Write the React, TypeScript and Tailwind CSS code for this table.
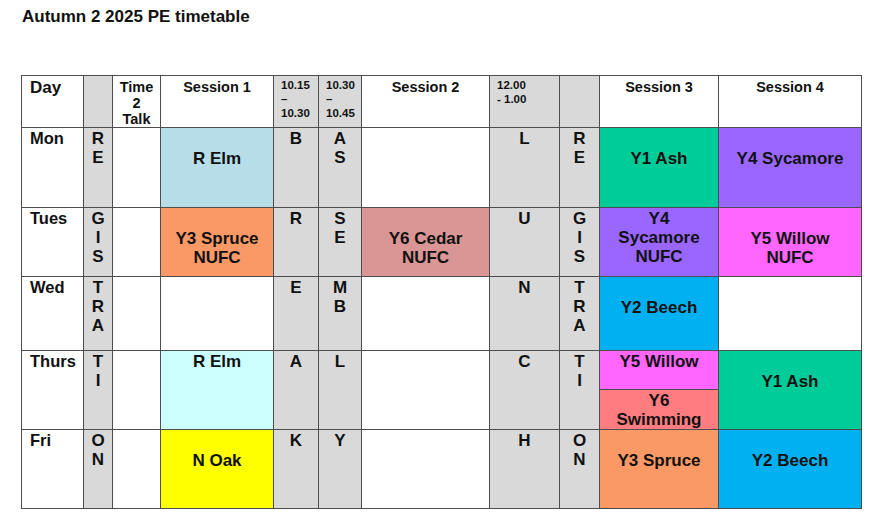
// Autumn 2 PE timetable
const cell = "border-r border-b border-[#4d4d4d]";
const gray = `${cell} bg-[#d9d9d9] text-center pt-px`;
const head = `${cell} bg-white text-center text-[14.5px] leading-[16px] pt-[3px]`;
const time = `${cell} bg-[#d9d9d9] text-[11.5px] leading-[14px] pl-[7px] pt-[2px]`;
const day = `${cell} bg-white pl-[8px] pt-px text-[16.5px]`;
const slot = `${cell} text-center pt-[21px]`;
const slotTop = `${cell} text-center pt-px`;

function Letters({ chars }: { chars: string[] }) {
  return (
    <>
      {chars.map((c, i) => (
        <div key={i}>{c}</div>
      ))}
    </>
  );
}

export default function App() {
  return (
    <div className="min-h-[527px] bg-white pl-[21px] pt-[7px] font-['Liberation_Sans',Arial,sans-serif] font-bold text-[#111]">
      <h1 className="text-[17px] leading-[20px] pl-px">Autumn 2 2025 PE timetable</h1>

      <div className="mt-[48px] w-fit grid grid-cols-[62px_29px_48px_113px_45px_43px_128px_70px_40px_119px_143px] grid-rows-[52px_80px_69px_74px_79px_79px] border-l border-t border-[#4d4d4d] text-[17px] leading-[19px]">
        {/* header */}
        <div className={`${cell} bg-white pl-[8px] pt-[2px] text-[17px]`}>Day</div>
        <div className={gray}></div>
        <div className={head}>
          Time
          <br />2<br />
          Talk
        </div>
        <div className={head}>Session 1</div>
        <div className={time}>
          10.15
          <br />–<br />
          10.30
        </div>
        <div className={time}>
          10.30
          <br />–<br />
          10.45
        </div>
        <div className={head}>Session 2</div>
        <div className={time}>
          12.00
          <br />- 1.00
        </div>
        <div className={gray}></div>
        <div className={head}>Session 3</div>
        <div className={head}>Session 4</div>

        {/* Mon */}
        <div className={day}>Mon</div>
        <div className={gray}>
          <Letters chars={["R", "E"]} />
        </div>
        <div className={`${cell} bg-white`}></div>
        <div className={`${slot} bg-[#b7dee8]`}>R Elm</div>
        <div className={gray}>B</div>
        <div className={gray}>
          <Letters chars={["A", "S"]} />
        </div>
        <div className={`${cell} bg-white`}></div>
        <div className={gray}>L</div>
        <div className={gray}>
          <Letters chars={["R", "E"]} />
        </div>
        <div className={`${slot} bg-[#00cc99]`}>Y1 Ash</div>
        <div className={`${slot} bg-[#9966ff]`}>Y4 Sycamore</div>

        {/* Tues */}
        <div className={day}>Tues</div>
        <div className={gray}>
          <Letters chars={["G", "I", "S"]} />
        </div>
        <div className={`${cell} bg-white`}></div>
        <div className={`${slot} bg-[#fa9966]`}>
          Y3 Spruce
          <br />
          NUFC
        </div>
        <div className={gray}>R</div>
        <div className={gray}>
          <Letters chars={["S", "E"]} />
        </div>
        <div className={`${slot} bg-[#d99694]`}>
          Y6 Cedar
          <br />
          NUFC
        </div>
        <div className={gray}>U</div>
        <div className={gray}>
          <Letters chars={["G", "I", "S"]} />
        </div>
        <div className={`${slotTop} bg-[#9966ff]`}>
          Y4
          <br />
          Sycamore
          <br />
          NUFC
        </div>
        <div className={`${slot} bg-[#ff66ff]`}>
          Y5 Willow
          <br />
          NUFC
        </div>

        {/* Wed */}
        <div className={day}>Wed</div>
        <div className={gray}>
          <Letters chars={["T", "R", "A"]} />
        </div>
        <div className={`${cell} bg-white`}></div>
        <div className={`${cell} bg-white`}></div>
        <div className={gray}>E</div>
        <div className={gray}>
          <Letters chars={["M", "B"]} />
        </div>
        <div className={`${cell} bg-white`}></div>
        <div className={gray}>N</div>
        <div className={gray}>
          <Letters chars={["T", "R", "A"]} />
        </div>
        <div className={`${slot} bg-[#00b0f0]`}>Y2 Beech</div>
        <div className={`${cell} bg-white`}></div>

        {/* Thurs */}
        <div className={day}>Thurs</div>
        <div className={gray}>
          <Letters chars={["T", "I"]} />
        </div>
        <div className={`${cell} bg-white`}></div>
        <div className={`${slotTop} bg-[#ccffff]`}>R Elm</div>
        <div className={gray}>A</div>
        <div className={gray}>L</div>
        <div className={`${cell} bg-white`}></div>
        <div className={gray}>C</div>
        <div className={gray}>
          <Letters chars={["T", "I"]} />
        </div>
        <div className={`${cell} flex flex-col text-center`}>
          <div className="h-[40px] bg-[#ff66ff] border-b border-[#4d4d4d] pt-px">Y5 Willow</div>
          <div className="flex-1 bg-[#ff7c80] pt-px">
            Y6
            <br />
            Swimming
          </div>
        </div>
        <div className={`${slot} bg-[#00cc99]`}>Y1 Ash</div>

        {/* Fri */}
        <div className={day}>Fri</div>
        <div className={gray}>
          <Letters chars={["O", "N"]} />
        </div>
        <div className={`${cell} bg-white`}></div>
        <div className={`${slot} bg-[#ffff00]`}>N Oak</div>
        <div className={gray}>K</div>
        <div className={gray}>Y</div>
        <div className={`${cell} bg-white`}></div>
        <div className={gray}>H</div>
        <div className={gray}>
          <Letters chars={["O", "N"]} />
        </div>
        <div className={`${slot} bg-[#fa9966]`}>Y3 Spruce</div>
        <div className={`${slot} bg-[#00b0f0]`}>Y2 Beech</div>
      </div>
    </div>
  );
}
